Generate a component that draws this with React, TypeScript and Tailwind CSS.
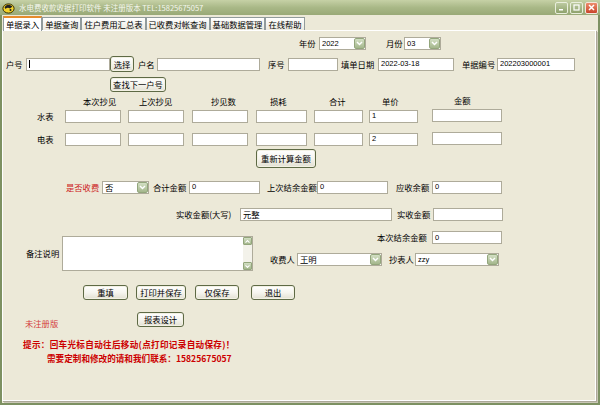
import React from "react";

type Kids = { className?: string; children?: React.ReactNode };

function Label({ className = "", children }: Kids) {
  return (
    <span className={`shrink-0 whitespace-nowrap text-[8.3px] leading-none ${className}`}>
      {children}
    </span>
  );
}

function Field({ className = "", value = "", cjk = false, cursor = false }: { className?: string; value?: string; cjk?: boolean; cursor?: boolean }) {
  return (
    <div
      className={`flex h-[13px] shrink-0 items-center border border-[#aeab9a] bg-white pl-[2px] leading-none text-black ${
        cjk ? "text-[8.3px]" : "font-['Liberation_Sans',sans-serif] text-[7.5px]"
      } ${className}`}
    >
      {cursor && <span className="h-[8px] w-px bg-black" />}
      {value}
    </div>
  );
}

function DropArrow() {
  return (
    <div className="flex h-[11px] w-[11px] shrink-0 items-center justify-center rounded-[2px] border border-[#93a67c] bg-linear-to-b from-[#d3dfc4] to-[#a4b78c]">
      <svg width="7" height="5" viewBox="0 0 7 5">
        <path d="M1 1 L3.5 3.6 L6 1" stroke="#ffffff" strokeWidth="1.4" fill="none" />
      </svg>
    </div>
  );
}

function Select({ className = "", value = "", cjk = false }: { className?: string; value?: string; cjk?: boolean }) {
  return (
    <div
      className={`flex h-[13px] shrink-0 items-center justify-between border border-[#aeab9a] bg-white pl-[2px] leading-none text-black ${
        cjk ? "text-[8.3px]" : "font-['Liberation_Sans',sans-serif] text-[7.5px]"
      } ${className}`}
    >
      <span>{value}</span>
      <DropArrow />
    </div>
  );
}

function Btn({ className = "", children }: Kids) {
  return (
    <div
      className={`flex shrink-0 items-center justify-center rounded-[3px] border border-[#5e6a45] bg-linear-to-b from-white via-[#f6f5ef] to-[#e2e0d2] text-[8.3px] leading-none text-black shadow-[inset_0_0_0_1px_#f3f1e4] ${className}`}
    >
      {children}
    </div>
  );
}

function Tab({ active = false, children }: Kids & { active?: boolean }) {
  return active ? (
    <div className="relative z-10 -mb-px flex h-[15px] items-center border-x border-t-2 border-x-[#919b9c] border-t-[#e68b2c] bg-white px-[2px] text-[8.3px] leading-none">
      {children}
    </div>
  ) : (
    <div className="flex h-[13px] items-center border-x border-t border-[#919b9c] bg-linear-to-b from-white to-[#eceae0] px-[2px] text-[8.3px] leading-none">
      {children}
    </div>
  );
}

function AppIcon() {
  return (
    <svg width="13" height="12" viewBox="0 0 13 12" className="ml-[2px] shrink-0">
      <ellipse cx="6.5" cy="6.5" rx="5.6" ry="4.6" fill="#f2d22a" stroke="#3a3000" strokeWidth="1" />
      <path d="M2.5 5 Q6 1 10.5 4.5 L8 6.5 Q5.5 5 3.5 7 Z" fill="#222" />
      <circle cx="8.5" cy="8" r="1" fill="#222" />
    </svg>
  );
}

function WinBtn({ kind }: { kind: "min" | "max" | "close" }) {
  if (kind === "close") {
    return (
      <div className="flex h-[12px] w-[13px] items-center justify-center rounded-[2px] border border-[#f3e6dc] bg-linear-to-b from-[#ec8c6c] to-[#c9432a]">
        <svg width="7" height="7" viewBox="0 0 7 7">
          <path d="M1 1 L6 6 M6 1 L1 6" stroke="#fff" strokeWidth="1.5" />
        </svg>
      </div>
    );
  }
  return (
    <div className="flex h-[12px] w-[13px] items-center justify-center rounded-[2px] border border-[#e9eedc] bg-linear-to-b from-[#bccaa0] to-[#8fa26d]">
      <svg width="7" height="7" viewBox="0 0 7 7">
        {kind === "min" ? (
          <rect x="1" y="5" width="4" height="1.5" fill="#fff" />
        ) : (
          <rect x="1" y="1" width="5" height="5" fill="none" stroke="#fff" strokeWidth="1.2" />
        )}
      </svg>
    </div>
  );
}

function Memo() {
  return (
    <div className="flex h-[35px] w-[191px] shrink-0 border border-[#aeab9a] bg-white">
      <div className="flex-1" />
      <div className="flex w-[9px] flex-col bg-[#f3f2ea]">
        <div className="flex h-[8px] items-center justify-center rounded-[1px] border border-[#93a67c] bg-linear-to-b from-[#d3dfc4] to-[#a4b78c]">
          <svg width="5" height="3" viewBox="0 0 5 3">
            <path d="M0.5 2.6 L2.5 0.6 L4.5 2.6" stroke="#fff" strokeWidth="1.1" fill="none" />
          </svg>
        </div>
        <div className="flex-1" />
        <div className="flex h-[8px] items-center justify-center rounded-[1px] border border-[#93a67c] bg-linear-to-b from-[#d3dfc4] to-[#a4b78c]">
          <svg width="5" height="3" viewBox="0 0 5 3">
            <path d="M0.5 0.4 L2.5 2.4 L4.5 0.4" stroke="#fff" strokeWidth="1.1" fill="none" />
          </svg>
        </div>
      </div>
    </div>
  );
}

export default function App() {
  return (
    <div className="flex h-[405px] w-[600px] flex-col overflow-hidden bg-[#7d9162] font-['Noto_Sans_CJK_SC',sans-serif] text-black">
      {/* title bar */}
      <div className="flex h-[15px] shrink-0 items-center bg-linear-to-b from-[#c6d1a6] via-[#a9b887] to-[#99a977]">
        <AppIcon />
        <span className="ml-[4px] whitespace-nowrap text-[7.5px] leading-none text-[#f5f7ee]">
          水电费收款收据打印软件 未注册版本 TEL:15825675057
        </span>
        <div className="ml-auto mr-[2px] flex gap-[2px]">
          <WinBtn kind="min" />
          <WinBtn kind="max" />
          <WinBtn kind="close" />
        </div>
      </div>

      <div className="mx-[2px] mb-[2px] flex flex-1 flex-col bg-[#ece9d8]">
        {/* tabs */}
        <div className="flex h-[15px] shrink-0 items-end pl-px">
          <Tab active>单据录入</Tab>
          <Tab>单据查询</Tab>
          <Tab>住户费用汇总表</Tab>
          <Tab>已收费对帐查询</Tab>
          <Tab>基础数据管理</Tab>
          <Tab>在线帮助</Tab>
        </div>

        {/* panel */}
        <div className="mr-[2px] mb-[2px] flex flex-1 flex-col overflow-hidden border border-white shadow-[1px_1px_0_#aca899,2px_2px_0_#c9c6b5]">
          {/* 年份 月份 */}
          <div className="mt-[6px] flex h-[13px] items-center">
            <Label className="ml-[296px] w-[18px]">年份</Label>
            <Select className="ml-[2px] w-[47px]" value="2022" />
            <Label className="ml-[20px] w-[17px]">月份</Label>
            <Select className="ml-px w-[37px]" value="03" />
          </div>

          {/* 户号 row */}
          <div className="mt-[6px] flex h-[16px] items-center">
            <Label className="ml-[3px] w-[18px]">户号</Label>
            <Field className="ml-[2px] w-[84px]" cursor />
            <Btn className="h-[16px] w-[24px]">选择</Btn>
            <Label className="ml-[4px] w-[18px]">户名</Label>
            <Field className="ml-px w-[103px]" />
            <Label className="ml-[8px] w-[18px]">序号</Label>
            <Field className="ml-[2px] w-[50px]" />
            <Label className="ml-[3px] w-[35px]">填单日期</Label>
            <Field className="ml-[2px] w-[76px]" value="2022-03-18" />
            <Label className="ml-[8px] w-[35px]">单据编号</Label>
            <Field className="w-[78px]" value="202203000001" />
          </div>

          <div className="mt-[5px] flex h-[15px] items-center">
            <Btn className="ml-[107px] h-[15px] w-[56px]">查找下一户号</Btn>
          </div>

          {/* headers */}
          <div className="mt-[4px] flex h-[11px] items-center">
            <Label className="ml-[80px] w-[34px]">本次抄见</Label>
            <Label className="ml-[22px] w-[34px]">上次抄见</Label>
            <Label className="ml-[38px] w-[26px]">抄见数</Label>
            <Label className="ml-[33px] w-[17px]">损耗</Label>
            <Label className="ml-[42px] w-[18px]">合计</Label>
            <Label className="ml-[35px] w-[17px]">单价</Label>
            <Label className="ml-[55px] -mt-[3px] w-[18px]">金额</Label>
          </div>

          {/* 水表 */}
          <div className="mt-[2px] flex h-[14px] items-center">
            <Label className="ml-[34px] w-[18px]">水表</Label>
            <Field className="ml-[10px] w-[56px]" />
            <Field className="ml-[7px] w-[56px]" />
            <Field className="ml-[8px] w-[56px]" />
            <Field className="ml-[8px] w-[51px]" />
            <Field className="ml-[7px] w-[49px]" />
            <Field className="ml-[6px] w-[49px]" value="1" />
            <Field className="ml-[14px] -mt-px w-[70px]" />
          </div>

          {/* 电表 */}
          <div className="mt-[9px] flex h-[14px] items-center">
            <Label className="ml-[34px] w-[18px]">电表</Label>
            <Field className="ml-[10px] w-[56px]" />
            <Field className="ml-[7px] w-[56px]" />
            <Field className="ml-[8px] w-[56px]" />
            <Field className="ml-[8px] w-[51px]" />
            <Field className="ml-[7px] w-[49px]" />
            <Field className="ml-[6px] w-[49px]" value="2" />
            <Field className="ml-[14px] -mt-px w-[70px]" />
          </div>

          <div className="mt-[3px] flex h-[19px] items-center">
            <Btn className="ml-[253px] h-[19px] w-[60px]">重新计算金额</Btn>
          </div>

          {/* 是否收费 */}
          <div className="mt-[12px] flex h-[14px] items-center">
            <Label className="ml-[63px] w-[34px] text-[#cc2020]">是否收费</Label>
            <Select className="ml-[2px] w-[47px]" value="否" cjk />
            <Label className="ml-[4px] w-[34px]">合计金额</Label>
            <Field className="ml-[2px] w-[71px]" value="0" />
            <Label className="ml-[7px] w-[50px]">上次结余金额</Label>
            <Field className="w-[71px]" value="0" />
            <Label className="ml-[8px] w-[34px]">应收余额</Label>
            <Field className="ml-[2px] w-[70px]" value="0" />
          </div>

          {/* 实收金额 */}
          <div className="mt-[13px] flex h-[15px] items-center">
            <Label className="ml-[173px] w-[64px]">实收金额(大写)</Label>
            <Field className="w-[152px]" value="元整" cjk />
            <Label className="ml-[5px] w-[34px]">实收金额</Label>
            <Field className="ml-[2px] w-[70px]" />
          </div>

          {/* 备注 + 收费人 */}
          <div className="mt-[8px] flex h-[41px] items-start">
            <div className="ml-[23px] mt-[6px] flex h-[35px] items-center">
              <Label className="w-[36px]">备注说明</Label>
              <Memo />
            </div>
            <div className="ml-[17px] flex flex-col">
              <div className="mt-px flex h-[13px] items-center">
                <Label className="ml-[107px] w-[55px]">本次结余金额</Label>
                <Field className="w-[70px]" value="0" />
              </div>
              <div className="mt-[9px] flex h-[13px] items-center">
                <Label className="w-[27px]">收费人</Label>
                <Select className="w-[85px]" value="王明" cjk />
                <Label className="ml-[7px] w-[26px]">抄表人</Label>
                <Select className="w-[84px]" value="zzy" />
              </div>
            </div>
          </div>

          {/* buttons */}
          <div className="mt-[14px] flex h-[15px] items-center">
            <Btn className="ml-[80px] h-[15px] w-[45px]">重填</Btn>
            <Btn className="ml-[8px] h-[15px] w-[50px]">打印并保存</Btn>
            <Btn className="ml-[9px] h-[15px] w-[44px]">仅保存</Btn>
            <Btn className="ml-[12px] h-[15px] w-[44px]">退出</Btn>
          </div>

          <div className="mt-[12px] flex h-[15px] items-start">
            <Label className="ml-[22px] mt-[7px] w-[34px] text-[#d43a3a]">未注册版</Label>
            <Btn className="ml-[78px] h-[15px] w-[47px]">报表设计</Btn>
          </div>

          <div className="mt-[10px] flex flex-col text-[8.6px] font-bold leading-[14px] text-[#cc0000]">
            <span className="ml-[20px] whitespace-nowrap tracking-[0.3px]">提示：回车光标自动往后移动(点打印记录自动保存)！</span>
            <span className="ml-[44px] whitespace-nowrap">需要定制和修改的请和我们联系：15825675057</span>
          </div>
        </div>
      </div>
    </div>
  );
}
